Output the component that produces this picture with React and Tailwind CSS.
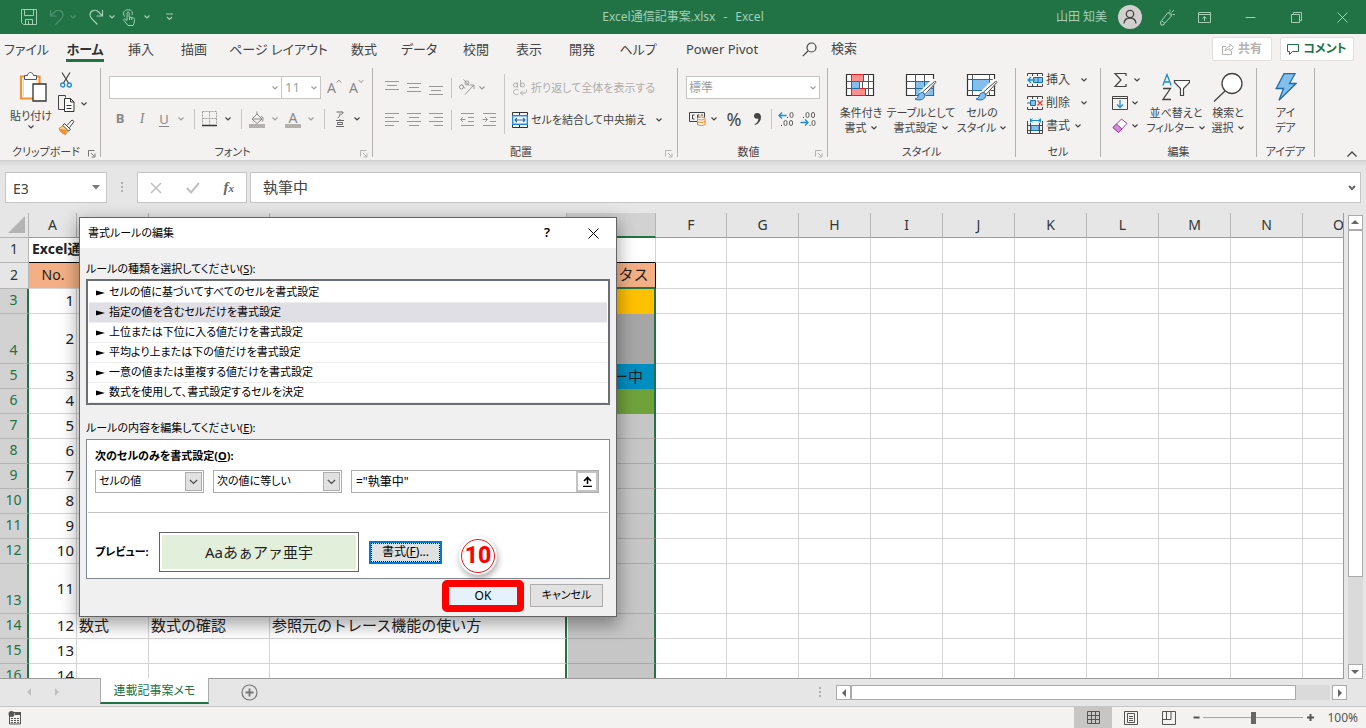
import { useState } from 'react';

const TABS = [
  ['ファイル', 'w-[53px]'],
  ['ホーム', 'w-16'],
  ['挿入', 'w-12'],
  ['描画', 'w-[58px]'],
  ['ページ レイアウト', 'w-[111px]'],
  ['数式', 'w-[60px]'],
  ['データ', 'w-[50px]'],
  ['校閲', 'w-16'],
  ['表示', 'w-[42px]'],
  ['開発', 'w-16'],
  ['ヘルプ', 'w-12'],
  ['Power Pivot', 'w-[120px]'],
];

const RULES = [
  'セルの値に基づいてすべてのセルを書式設定',
  '指定の値を含むセルだけを書式設定',
  '上位または下位に入る値だけを書式設定',
  '平均より上または下の値だけを書式設定',
  '一意の値または重複する値だけを書式設定',
  '数式を使用して、書式設定するセルを決定',
];

const COLUMNS = ['A', 'B', 'C', 'D', 'E', 'F', 'G', 'H', 'I', 'J', 'K', 'L', 'M', 'N', 'O'];
const COVERED = ['B', 'C', 'D', 'E'];
const COL_WIDTH = {
  A: 'w-12',
  C: 'w-[121px]',
  D: 'w-[297px]',
  E: 'w-[89px]',
  F: 'w-[71px]',
};

const ROWS = [
  { n: 1, A: 'Excel通信' },
  { n: 2, A: 'No.', E: 'ステータス' },
  { n: 3, A: '1', fill: 'bg-[#ffc000]' },
  { n: 4, A: '2', tall: true, fill: 'bg-[#a6a6a6]' },
  { n: 5, A: '3', E: 'レビュー中', fill: 'bg-[#008dc0]' },
  { n: 6, A: '4', fill: 'bg-[#70a23c]' },
  { n: 7, A: '5' },
  { n: 8, A: '6' },
  { n: 9, A: '7' },
  { n: 10, A: '8' },
  { n: 11, A: '9' },
  { n: 12, A: '10' },
  { n: 13, A: '11', tall: true },
  { n: 14, A: '12', B: '数式', C: '数式の確認', D: '参照元のトレース機能の使い方' },
  { n: 15, A: '13' },
  { n: 16, A: '14' },
];

function Svg({ w = 16, h = 16, className = '', children }) {
  return (
    <svg
      width={w}
      height={h}
      viewBox={`0 0 ${w} ${h}`}
      fill="none"
      stroke="currentColor"
      className={`shrink-0 ${className}`}
      aria-hidden="true"
    >
      {children}
    </svg>
  );
}

function Chevron({ className = '' }) {
  return (
    <Svg w={8} h={6} className={className}>
      <path d="M1.500 1.500 4 4l2.500-2.500" strokeWidth="1.200" />
    </Svg>
  );
}

function IconButton({ label, className = 'w-[22px]', children }) {
  return (
    <button type="button" aria-label={label} className={`flex h-6 shrink-0 items-center justify-center ${className}`}>
      {children}
    </button>
  );
}

function Sep({ className = 'mx-[6px]' }) {
  return <span className={`h-5 w-px shrink-0 bg-[#c8c6c4] ${className}`} />;
}

function Launcher({ className = 'text-[#777]' }) {
  return (
    <Svg w={8} h={8} className={className}>
      <path d="M.5 6.500V.5h6M3 3l3 3M7 3.500V7H3.500" />
    </Svg>
  );
}

function Group({ title, width, launcher, children }) {
  return (
    <section className={`flex h-[89px] shrink-0 flex-col border-r border-[#b3b0ad] ${width}`}>
      <div className="flex h-[78px] w-full shrink-0">{children}</div>
      <div className="flex h-[11px] items-center leading-[11px]">
        <span className={launcher ? 'w-1' : 'w-3'} />
        <span className="flex-1 whitespace-nowrap text-center">{title}</span>
        <span className="flex w-3 pt-1">{launcher && <Launcher className={launcher} />}</span>
      </div>
    </section>
  );
}

function BigButton({ icon, lines, chevron = true, className }) {
  return (
    <button type="button" className={`flex shrink-0 flex-col items-center leading-[15px] ${className}`}>
      <span className="flex h-[37px] items-center justify-center">{icon}</span>
      <span className="whitespace-nowrap">{lines[0]}</span>
      <span className="flex items-center gap-[3px] whitespace-nowrap">
        {lines[1]}
        {chevron && <Chevron />}
      </span>
    </button>
  );
}

function TitleBar() {
  return (
    <header className="flex h-[34px] shrink-0 items-center bg-[#217346] text-xs text-[#a3d0b5]">
      <div className="flex flex-1 items-center">
        <IconButton label="上書き保存" className="ml-[17px] w-6">
          <Svg>
            <path d="M.5.5h15v15h-13l-2-2zM3.500.5v6h9v-6M4.500 15.500v-5h7v5M7.500 12v3" />
          </Svg>
        </IconButton>
        <IconButton label="元に戻す" className="ml-1 w-6 text-[#4f9270]">
          <Svg>
            <path d="M1.500 1v6h6M1.500 7 6 2.500C9 0 14 1.500 14 6c0 2-1 3-2.500 4.500L6.500 15.500" strokeWidth="1.200" />
          </Svg>
        </IconButton>
        <Chevron className="text-[#4f9270]" />
        <IconButton label="やり直し" className="ml-[7px] w-6">
          <Svg>
            <path d="M14.500 1v6h-6M14.500 7 10 2.500C7 0 2 1.500 2 6c0 2 1 3 2.500 4.500l5 5" strokeWidth="1.200" />
          </Svg>
        </IconButton>
        <Chevron />
        <IconButton label="タッチ/マウス モードの切り替え" className="ml-px w-6">
          <Svg w={14} h={17}>
            <path d="M5 11.500V4.200c0-1.600 2.200-1.600 2.200 0V8l4 .8c1 .2 1.400.8 1.300 1.700l-.5 4-1 2H6l-4-5c-.8-1.200.4-2 1.400-1.300z" />
            <path d="M2.500 7.500C.3 4 2 .8 6 .8s5 2.700 4 5.200M7.500 8v3M9.700 8.500V11" />
          </Svg>
        </IconButton>
        <Chevron className="ml-[2px]" />
        <IconButton label="クイック アクセス ツール バーのユーザー設定" className="ml-[6px] w-6">
          <Svg w={9} h={8}>
            <path d="M1 1h7M2 4l2.500 2.500L7 4" strokeWidth="1.200" />
          </Svg>
        </IconButton>
      </div>
      <h1 className="flex gap-2 whitespace-nowrap">
        <span>Excel通信記事案.xlsx</span>
        <span>-</span>
        <span>Excel</span>
      </h1>
      <div className="flex flex-1 items-center justify-end">
        <span className="whitespace-nowrap">山田 知美</span>
        <span className="ml-[11px] flex size-6 items-center justify-center rounded-full bg-[#d2d0ce] text-[#444]">
          <Svg w={14} h={16}>
            <circle cx="7" cy="5" r="3.700" strokeWidth="1.300" />
            <path d="M1 14.500c.3-3.500 2.500-5.500 6-5.500s5.700 2 6 5.500" strokeWidth="1.300" />
          </Svg>
        </span>
        <IconButton label="近日公開の機能" className="ml-3 w-[26px]">
          <Svg w={17} h={17}>
            <path d="M9 3.500 1.500 13l.5 3h2l8.500-9zM3 12l3 2.500-2 1.500M9.500 3.500c1-.5 3.500 1.500 3 3M11 2.500V.5M12.500 3.500 15 1M13.500 5.500h2.500" />
          </Svg>
        </IconButton>
        <IconButton label="リボンの表示オプション" className="ml-[11px] w-[26px]">
          <Svg w={13} h={11}>
            <path d="M.5.5h12v10H.5zM.5 2.500h12M6.500 9V4.500M4.500 6.500l2-2 2 2" />
          </Svg>
        </IconButton>
        <IconButton label="最小化" className="w-[46px] pl-5">
          <Svg w={11} h={11}>
            <path d="M.5 5.500h10" />
          </Svg>
        </IconButton>
        <IconButton label="元に戻す (縮小)" className="w-[46px] pl-5">
          <Svg w={11} h={11}>
            <path d="M.5 2.500h8v8h-8zM2.500 2.500v-2h8v8h-2" />
          </Svg>
        </IconButton>
        <IconButton label="閉じる" className="mr-[11px] w-[46px] pl-5">
          <Svg w={11} h={11}>
            <path d="m.5.5 10 10m0-10-10 10" />
          </Svg>
        </IconButton>
      </div>
    </header>
  );
}

function TabBar() {
  return (
    <nav className="flex h-[34px] shrink-0 items-center text-[13px]">
      {TABS.map(([name, width]) => (
        <button key={name} type="button" className={`flex h-[30px] shrink-0 justify-center self-start whitespace-nowrap ${width}`}>
          <span
            className={`h-7 pt-1 leading-[22px] ${name === 'ホーム' ? 'border-b-[3px] border-[#217346] font-bold text-[#333]' : ''}`}
          >
            {name}
          </span>
        </button>
      ))}
      <button type="button" className="ml-5 flex h-[30px] items-center gap-[14px] self-start whitespace-nowrap">
        <Svg w={15} h={15}>
          <circle cx="9.500" cy="5.500" r="4.500" strokeWidth="1.200" />
          <path d="M6 9 .8 14.200" strokeWidth="1.200" />
        </Svg>
        検索
      </button>
      <div className="ml-auto mr-3 flex gap-2 self-start pt-[3px]">
        <button
          type="button"
          className="flex h-6 w-[60px] items-center justify-center gap-1 whitespace-nowrap rounded-xs border border-[#e1dfdd] bg-white text-xs font-bold text-[#b5b3b1]"
        >
          <Svg w={12} h={12}>
            <path d="M4 3.500H.5v8h9V8M3 8c.5-3 2.500-4.500 5-4.500V1l3.500 3.500L8 8V6C6 6 4.500 6.500 3 8z" />
          </Svg>
          共有
        </button>
        <button
          type="button"
          className="flex h-6 w-[74px] items-center justify-center gap-1 whitespace-nowrap rounded-xs border border-[#e1dfdd] bg-white text-xs font-bold text-[#217346]"
        >
          <Svg w={12} h={11}>
            <path d="M.5.5h11v7h-6l-3 3v-3h-2z" />
          </Svg>
          コメント
        </button>
      </div>
    </nav>
  );
}

function HLines({ rows }) {
  return (
    <Svg w={14} h={16} className="text-[#9a9896]">
      {rows.map(([x, y, w]) => (
        <path key={y} d={`M${x} ${y}.5h${w}`} />
      ))}
    </Svg>
  );
}

function TableIcon({ children }) {
  return (
    <Svg w={32} h={28}>
      <path d="M1.500 1.500h27v21h-27z" fill="#fff" stroke="#333" strokeWidth="1.200" />
      {children}
    </Svg>
  );
}

function Brush() {
  return (
    <>
      <path d="M30 8 19 22l-3-2.500L28 7.500z" stroke="#fff" strokeWidth="3" fill="#fff" />
      <path d="M29.500 8.500c.7-.8 1.800.2 1.200 1L20 21.500 17.500 19z" fill="#fff" stroke="#444" />
      <path d="M17.500 19.500c-3 0-4 2-4.500 4-.4 1.500-2 2.300-3 2.500 4 2 9.500 1 10-4z" fill="#83beec" stroke="#1e6dab" />
    </>
  );
}

function CellIcon({ kind }) {
  return (
    <Svg w={16} h={16}>
      {kind === 'format' ? (
        <>
          <path d="M3.500 2.500h10M3.500.5v4M13.500.5v4M5.500.8 3.700 2.500l1.800 1.700M11.500.8l1.800 1.700-1.800 1.700" stroke="#1e8bd2" />
          <path d="M.5 3v12.500h15V3M.5 7.500h15M.5 12.500h15M3.500 5v10M12.500 5v10" stroke="#444" />
          <path d="M4 7.500h8v5H4z" fill="#83beec" stroke="#1e6dab" />
        </>
      ) : (
        <>
          <path d="M.5 4V1.500h15V4M5.500 1.500V4M10.500 1.500V4M.5 12v2.500h15V12M5.500 12v2.500M10.500 12v2.500" stroke="#444" />
          {kind === 'insert' ? (
            <>
              <path d="M6.500 5.500h9v5h-9zM11 5.500v5" fill="#83beec" stroke="#1e6dab" />
              <path d="M8 8H1M4 5 1 8l3 3" stroke="#1e8bd2" strokeWidth="1.300" />
            </>
          ) : (
            <>
              <path d="M3.500 5.500h5v5h-5zM0 8h3" fill="#83beec" stroke="#1e6dab" />
              <path d="m10.500 5.500 5 5m0-5-5 5" stroke="#e8413c" strokeWidth="1.500" />
            </>
          )}
        </>
      )}
    </Svg>
  );
}

function Ribbon() {
  return (
    <div className="flex h-[93px] shrink-0 border-b border-[#d2d0ce] text-[11px]">
      <Group title="クリップボード" width="w-[101px]" launcher="text-[#777]">
        <button type="button" className="ml-1 flex w-[54px] flex-col items-center leading-[15px]">
          <Svg w={28} h={31} className="mb-[6px] ml-1 mt-[3px]">
            <path d="M2 5.500h18.500v22H2z" fill="#fff" stroke="#f29130" strokeWidth="2.200" />
            <path d="M4.500 7.500v18M18 8v4" stroke="#fbd48a" />
            <path d="M5.500 8.500v-4h3c.5-4 5.500-4 6 0h3v4z" fill="#fff" stroke="#555" />
            <path d="M14 13h13v17H14z" fill="#fff" stroke="#333" strokeWidth="1.300" />
          </Svg>
          <span className="whitespace-nowrap">貼り付け</span>
          <Chevron className="mt-px" />
        </button>
        <div className="flex flex-col">
          <IconButton label="切り取り" className="w-4">
            <Svg w={12} h={16}>
              <path d="M2 .5 8.500 11M10 .5 3.500 11" stroke="#444" strokeWidth="1.200" />
              <circle cx="2.700" cy="13" r="2" stroke="#1e8bd2" strokeWidth="1.300" />
              <circle cx="9.300" cy="13" r="2" stroke="#1e8bd2" strokeWidth="1.300" />
            </Svg>
          </IconButton>
          <button type="button" aria-label="コピー" className="flex h-[23px] items-center gap-[5px]">
            <Svg w={17} h={17}>
              <path d="M6.500 14.500h-6v-14h7v2" stroke="#444" />
              <path d="M6.500 3.500h6l3.500 3.500v9.500H6.500zM12.500 3.500V7H16M8.500 10.500h5M8.500 13.500h5" stroke="#333" fill="#fff" />
            </Svg>
            <Chevron />
          </button>
          <IconButton label="書式のコピー/貼り付け" className="w-4">
            <Svg w={17} h={16}>
              <path d="M1 9.500 6 6l5 5-3.500 4.500C4 14.500 2 12.500 1 9.500z" fill="#fbd48a" stroke="#f08020" />
              <path d="M1 9.500l8 1.500-1.500 4.500C4 14.500 2 12.500 1 9.500z" fill="#f29130" stroke="none" />
              <path d="m6.500 4.500 6 6M9 6.500 14 1l2 1.500-4.500 6M6.500 4.500l-1.500 2 5.500 5.500 2-1.500" stroke="#444" fill="#fff" />
            </Svg>
          </IconButton>
        </div>
      </Group>

      <Group title="フォント" width="w-[272px]" launcher="text-[#b5b3b1]">
        <div className="flex flex-col pl-2 pt-2">
          <div className="flex items-center">
            <button type="button" aria-label="フォント名" className="flex h-[23px] w-[173px] items-center justify-end border border-[#c8c6c4] bg-white pr-[2px] text-[#a19f9d]">
              <Chevron />
            </button>
            <button type="button" aria-label="フォント サイズ" className="-ml-px flex h-[23px] w-10 items-center justify-between border border-[#c8c6c4] bg-white pl-[3px] pr-[2px] text-[13px] text-[#a19f9d]">
              11
              <Chevron />
            </button>
            <button type="button" aria-label="フォント サイズの拡大" className="ml-[6px] flex w-[22px] text-sm text-[#8a8886]">
              A<Svg w={6} h={5} className="mt-px"><path d="M.8 3.500 3 1.200l2.200 2.300" /></Svg>
            </button>
            <button type="button" aria-label="フォント サイズの縮小" className="flex w-[22px] text-sm text-[#8a8886]">
              A<Svg w={6} h={5} className="mt-px"><path d="M.8 1.200 3 3.500l2.200-2.300" /></Svg>
            </button>
          </div>
          <div className="mt-2 flex items-center text-[13px] text-[#8a8886]">
            <IconButton label="太字"><b>B</b></IconButton>
            <IconButton label="斜体"><i className="font-['Liberation_Serif'] text-sm">I</i></IconButton>
            <IconButton label="下線"><span className="border-b border-[#8a8886] leading-[14px]">U</span></IconButton>
            <IconButton label="下線の種類" className="w-3 text-[#a19f9d]"><Chevron /></IconButton>
            <Sep className="ml-[7px] mr-1" />
            <IconButton label="罫線">
              <Svg>
                <path d="M.5.500h14v13M.5.5v13M7.500.5v13M.5 7.500h14" stroke="#a19f9d" strokeDasharray="2 1" />
                <path d="M0 14.500h15" stroke="#333" strokeWidth="1.500" />
              </Svg>
            </IconButton>
            <IconButton label="罫線の種類" className="w-[14px] text-[#444]"><Chevron /></IconButton>
            <Sep className="ml-[6px] mr-1" />
            <IconButton label="塗りつぶしの色">
              <Svg w={16} h={17}>
                <path d="M3 8 8 3l5 5-5 4.500zM8 3V.5M12 5.500c2 0 2.800 2.500 1.500 5M4 8h8" />
                <path d="M0 15h16" stroke="#b3b0ad" strokeWidth="4" />
              </Svg>
            </IconButton>
            <IconButton label="塗りつぶしの色の一覧" className="w-[14px] text-[#a19f9d]"><Chevron /></IconButton>
            <IconButton label="フォントの色">
              <span className="w-4 border-b-4 border-[#b3b0ad] text-center text-sm leading-[13px]">A</span>
            </IconButton>
            <IconButton label="フォントの色の一覧" className="w-[14px] text-[#a19f9d]"><Chevron /></IconButton>
            <Sep className="ml-[6px] mr-1" />
            <IconButton label="ふりがなの表示/非表示" className="w-[22px] text-[#666]">
              <Svg w={10} h={17}>
                <path d="M1.500 1h6.500c0 1.500-.8 2-2 2.500M5 2.500C5 5 4.500 6 2.500 7M1 9.500h8M2.500 11.500h5v2h-5zM1 15.500h8M5 8v1.500" />
              </Svg>
            </IconButton>
            <IconButton label="ふりがなの設定" className="w-3 text-[#444]"><Chevron /></IconButton>
          </div>
        </div>
      </Group>

      <Group title="配置" width="w-[305px]" launcher="text-[#b5b3b1]">
        <div className="flex flex-col gap-2 pl-2 pt-2">
          <div className="flex items-center text-[#9a9896]">
            <IconButton label="上揃え"><HLines rows={[[0, 1, 14], [2, 5, 10], [0, 9, 14]]} /></IconButton>
            <IconButton label="上下中央揃え"><HLines rows={[[0, 3, 14], [2, 7, 10], [0, 11, 14]]} /></IconButton>
            <IconButton label="下揃え"><HLines rows={[[0, 6, 14], [2, 10, 10], [0, 14, 14]]} /></IconButton>
            <Sep className="ml-1 mr-1" />
            <IconButton label="方向">
              <Svg w={18} h={18}>
                <path d="M7 15.500 16 6M16 10V6h-4" />
                <circle cx="3.500" cy="8" r="2" />
                <path d="M4 5.500 7 9.500M5.500.5 11 6.500" />
                <circle cx="9" cy="4" r="2" />
              </Svg>
            </IconButton>
            <Chevron />
          </div>
          <div className="flex items-center text-[#9a9896]">
            <IconButton label="左揃え"><HLines rows={[[0, 1, 14], [0, 5, 9], [0, 9, 14], [0, 13, 9]]} /></IconButton>
            <IconButton label="中央揃え"><HLines rows={[[0, 1, 14], [2, 5, 10], [0, 9, 14], [2, 13, 10]]} /></IconButton>
            <IconButton label="右揃え"><HLines rows={[[0, 1, 14], [5, 5, 9], [0, 9, 14], [5, 13, 9]]} /></IconButton>
            <Sep className="ml-1 mr-1" />
            <IconButton label="インデントを減らす">
              <Svg w={15} h={14}>
                <path d="M1 .5h13M8 4.500h6M8 8.500h6M1 12.500h13M5.500 6.500H.5M2.800 4.200.5 6.500l2.300 2.300" />
              </Svg>
            </IconButton>
            <IconButton label="インデントを増やす">
              <Svg w={15} h={14}>
                <path d="M1 .5h13M8 4.500h6M8 8.500h6M1 12.500h13M.5 6.500h5M3.200 4.200 5.500 6.500 3.200 8.800" />
              </Svg>
            </IconButton>
          </div>
        </div>
        <Sep className="ml-1 mt-[6px] h-[60px]" />
        <div className="flex flex-col gap-2 pl-[7px] pt-2">
          <button type="button" className="flex h-6 items-center gap-[3px] whitespace-nowrap text-[#b0aeac]">
            <Svg w={16} h={16}>
              <circle cx="3.500" cy="5" r="2" />
              <path d="M5.500 2.500V7.500M8.500 0v7M6.500 10C4 8.500 1.500 10 1.500 12s2.500 3.500 5 2M14.500 9.500v2c0 1-.5 1.500-1.500 1.500H8.500M11 10.500 8.500 13l2.500 2.500" />
              <circle cx="10.500" cy="5" r="2" />
            </Svg>
            折り返して全体を表示する
          </button>
          <button type="button" className="flex h-6 items-center gap-[3px] whitespace-nowrap">
            <Svg w={16} h={16}>
              <path d="M.5 3.500v-3h15v3M7.500.5v3M.5 12.500v3h15v-3M7.500 12.500v3" stroke="#333" />
              <path d="M.7 3.700h14.600v8.600H.7z" fill="#fff" stroke="#1e8bd2" strokeWidth="1.400" />
              <path d="M3 8h10M5 6 3 8l2 2M11 6l2 2-2 2" stroke="#1e6dab" strokeWidth="1.200" />
            </Svg>
            セルを結合して中央揃え
            <Chevron className="ml-[6px]" />
          </button>
        </div>
      </Group>

      <Group title="数値" width="w-[150px]" launcher="text-[#b5b3b1]">
        <div className="flex flex-col pl-2 pt-2">
          <button type="button" className="flex h-[23px] w-[134px] items-center justify-between border border-[#c8c6c4] bg-white pl-[2px] pr-[2px] text-xs text-[#a19f9d]">
            標準
            <Chevron />
          </button>
          <div className="mt-2 flex items-center">
            <IconButton label="通貨表示形式">
              <Svg w={17} h={14}>
                <path d="M.5.5h15v9H.5z" stroke="#444" />
                <path d="M5.500 3H3.500v4h2M8.500 7V3h2M8.500 5h2M12 3h2" stroke="#444" />
                <path d="M8.500 6.500v6c1 1.300 6.500 1.300 7.500 0v-6z" fill="#fff" stroke="#f08020" />
                <ellipse cx="12.200" cy="6.500" rx="3.800" ry="1.500" fill="#fff" stroke="#f08020" />
                <path d="M8.500 9.500c1 1.300 6.500 1.300 7.500 0" stroke="#f08020" />
              </Svg>
            </IconButton>
            <IconButton label="通貨の一覧" className="w-3"><Chevron /></IconButton>
            <IconButton label="パーセント スタイル" className="ml-[2px] w-6 text-[18px]">%</IconButton>
            <IconButton label="桁区切りスタイル">
              <Svg w={9} h={14}>
                <path d="M4.300 1C2.300 1 1 2.300 1 4s1.300 2.800 3 2.800c.6 0 1-.1 1.400-.4C5.300 9 4 11 1.500 12.200l.6.900C6 11.500 8 8.500 8 5.200 8 2.600 6.500 1 4.300 1z" fill="#444" stroke="none" />
              </Svg>
            </IconButton>
            <Sep className="mx-[3px]" />
            <IconButton label="小数点以下の表示桁数を増やす">
              <Svg w={16} h={16}>
                <path d="M8.500 4.500H1M4 1.500l-3 3 3 3" stroke="#1e8bd2" strokeWidth="1.300" />
                <path d="M9 6.500h1M3 14.500h1" stroke="#444" />
                <rect x="12" y="1.500" width="3" height="5" rx="1.500" stroke="#666" />
                <rect x="6" y="9.500" width="3" height="5" rx="1.500" stroke="#666" />
                <rect x="11.500" y="9.500" width="3" height="5" rx="1.500" stroke="#666" />
              </Svg>
            </IconButton>
            <IconButton label="小数点以下の表示桁数を減らす">
              <Svg w={16} h={16}>
                <path d="M.5 11.500H8M5 8.500l3 3-3 3" stroke="#1e8bd2" strokeWidth="1.300" />
                <path d="M3 6.500h1M9.500 14.500h1" stroke="#444" />
                <rect x="6" y="1.500" width="3" height="5" rx="1.500" stroke="#666" />
                <rect x="11.500" y="1.500" width="3" height="5" rx="1.500" stroke="#666" />
                <rect x="12" y="9.500" width="3" height="5" rx="1.500" stroke="#666" />
              </Svg>
            </IconButton>
          </div>
        </div>
      </Group>

      <Group title="スタイル" width="w-[188px]">
        <BigButton
          className="w-[62px] pl-1"
          lines={['条件付き', '書式']}
          icon={
            <TableIcon>
              <path d="M1.500 8.500h27M1.500 15.500h27M6.500 1.500v21M17.500 1.500v21M23.500 1.500v21" stroke="#555" />
              <path d="M6.500 1.500h12v7h-12zM6.500 15.500h14v7h-14z" fill="#ff8e8e" stroke="#e02020" />
              <path d="M6.500 8.500h8v7h-8z" fill="#83beec" stroke="#1e6dab" />
            </TableIcon>
          }
        />
        <BigButton
          className="w-[62px]"
          lines={['テーブルとして', '書式設定']}
          icon={
            <TableIcon>
              <path d="M10.500 8.500h18v14h-18z" fill="#83beec" stroke="none" />
              <path d="M1.500 8.500h27M1.500 15.500h27M10.500 1.500v21M19.500 1.500v21" stroke="#555" />
              <path d="M10.500 8.500h18v14h-18zM10.500 15.500h18M19.500 8.500v14" stroke="#1e6dab" />
              <Brush />
            </TableIcon>
          }
        />
        <BigButton
          className="w-[60px]"
          lines={['セルの', 'スタイル']}
          icon={
            <TableIcon>
              <path d="M1.500 6.500h27M1.500 17.500h27M6.500 1.500v21M23.500 1.500v21" stroke="#555" />
              <path d="M6.500 6.500h17v11h-17z" fill="#83beec" stroke="#1e6dab" />
              <Brush />
            </TableIcon>
          }
        />
      </Group>

      <Group title="セル" width="w-[85px]">
        <div className="flex w-full flex-col pl-[11px] text-xs">
          {[['挿入', 'insert'], ['削除', 'delete'], ['書式', 'format']].map(([label, kind]) => (
            <button key={kind} type="button" className="flex h-[23px] items-center gap-[3px] whitespace-nowrap">
              <CellIcon kind={kind} />
              {label}
              <Chevron className={kind === 'format' ? 'ml-px' : 'ml-[7px]'} />
            </button>
          ))}
        </div>
      </Group>

      <Group title="編集" width="w-[156px]">
        <div className="flex flex-col pl-[11px]">
          <button type="button" aria-label="合計" className="flex h-[23px] items-center gap-[5px]">
            <Svg w={16} h={16}>
              <path d="M14 4V1.500H3L9 8l-6 6.500h11V12" stroke="#444" strokeWidth="1.200" />
            </Svg>
            <Chevron />
          </button>
          <button type="button" aria-label="フィル" className="flex h-[23px] items-center gap-[3px]">
            <Svg w={16} h={16}>
              <path d="M.5 1.500h15v13H.5zM.5 3.500h15" stroke="#444" />
              <path d="M8 5v7M5 9.500l3 3 3-3" stroke="#1e8bd2" strokeWidth="1.300" />
            </Svg>
            <Chevron />
          </button>
          <button type="button" aria-label="クリア" className="flex h-[23px] items-center gap-[3px]">
            <Svg w={16} h={16}>
              <path d="m1 9.500 8.500-8.500 5.500 4.500-8.500 9z" fill="#fff" stroke="#a33ea8" />
              <path d="m1 9.500 3.500-3.500 5.500 5-3.500 3.500z" fill="#d48ad8" stroke="#a33ea8" />
            </Svg>
            <Chevron />
          </button>
        </div>
        <BigButton
          className="ml-[6px] w-[58px]"
          lines={['並べ替えと', 'フィルター']}
          icon={
            <Svg w={28} h={28}>
              <path d="m.8 12.500 4.200-11 4.200 11M2.300 9h5.400" stroke="#1e8bd2" strokeWidth="1.300" />
              <path d="M1 15.500h7.500L1 26.500h8" stroke="#444" strokeWidth="1.300" />
              <path d="M12.500 7.500h15v2l-6 6v7h-3v-7l-6-6z" fill="#fff" stroke="#444" strokeWidth="1.200" />
            </Svg>
          }
        />
        <BigButton
          className="w-[46px]"
          lines={['検索と', '選択']}
          icon={
            <Svg w={30} h={30}>
              <circle cx="19" cy="11.500" r="10" fill="#fff" stroke="#444" strokeWidth="1.300" />
              <path d="M12 19 1 29.500" stroke="#444" strokeWidth="1.300" />
            </Svg>
          }
        />
      </Group>

      <Group title="アイデア" width="w-[58px]">
        <BigButton
          className="w-[57px]"
          chevron={false}
          lines={['アイ', 'デア']}
          icon={
            <Svg w={22} h={28}>
              <path d="M9 .700h11L14.500 10.500H21L4 27.300l4.500-11.800H1.200z" fill="#83beec" stroke="#1e6dab" strokeWidth="1.300" />
            </Svg>
          }
        />
      </Group>
      <button type="button" aria-label="リボンを折りたたむ" className="ml-auto mr-2 self-end pb-[2px]">
        <Svg w={12} h={8}>
          <path d="M1.500 6.500 6 2l4.500 4.500" strokeWidth="1.300" />
        </Svg>
      </button>
    </div>
  );
}

function FormulaBar() {
  return (
    <div className="flex h-[52px] shrink-0 items-start bg-linear-to-b from-[#d6d6d6] to-[#e6e6e6] to-10% pl-[5px] pr-[5px] pt-[11px] text-[#444]">
      <div className="flex h-[31px] w-[102px] shrink-0 items-center border border-[#c6c6c6] bg-white">
        <input aria-label="名前ボックス" defaultValue="E3" className="w-[86px] pl-[7px] pt-[2px] text-sm outline-none" />
        <Svg w={8} h={5}>
          <path d="M0 0h8L4 4.500z" fill="#777" stroke="none" />
        </Svg>
      </div>
      <Svg w={30} h={31} className="text-[#b0b0b0]">
        <path d="M15 10v2M15 14v2M15 18v2" strokeWidth="2" />
      </Svg>
      <div className="flex h-[31px] w-[110px] shrink-0 items-center justify-between border border-[#c6c6c6] bg-white px-3">
        <button type="button" aria-label="キャンセル">
          <Svg w={12} h={12} className="text-[#c0c0c0]"><path d="m1 1 10 10m0-10L1 11" strokeWidth="1.600" /></Svg>
        </button>
        <button type="button" aria-label="入力">
          <Svg w={14} h={12} className="text-[#c0c0c0]"><path d="m1 6 4 4.500 8-9.500" strokeWidth="2" /></Svg>
        </button>
        <button type="button" aria-label="関数の挿入" className="font-['Liberation_Serif'] text-[15px] font-bold italic text-[#666]">
          f<span className="text-[11px]">x</span>
        </button>
      </div>
      <div className="ml-[3px] flex h-[31px] flex-1 items-center border border-[#c6c6c6] bg-white pr-1">
        <input aria-label="数式バー" defaultValue="執筆中" className="min-w-0 flex-1 pl-3 text-[15px] outline-none" />
        <Svg w={8} h={6} className="text-[#666]"><path d="m1 1 3 3 3-3" strokeWidth="2" /></Svg>
      </div>
    </div>
  );
}

function cellClass(row, col) {
  const base = 'overflow-visible whitespace-nowrap p-0 pb-[2px] align-middle';
  if (col > 'E') return `${base} border-b border-r border-[#d4d4d4]`;
  if (row.n === 1) {
    return `${base} border-b border-b-black pl-[3px] text-sm font-bold ${col === 'E' ? 'border-r border-r-[#d4d4d4]' : ''}`;
  }
  if (row.n === 2) {
    return col === 'E'
      ? `${base} border-b-2 border-r border-b-[#217346] border-r-black bg-[#f4b084] text-center text-[15px]`
      : `${base} border-b border-b-[#d4d4d4] bg-[#f4b084] text-center text-sm`;
  }
  if (col === 'E') {
    return `${base} border-l border-r-2 border-l-white border-r-[#217346] text-[15px] ${
      row.fill || 'border-b border-b-[#a9a9a9] bg-[#c6c6c6]'
    }`;
  }
  if (col === 'D') return `${base} border-b border-r-2 border-b-[#d4d4d4] border-r-[#217346] pl-[2px] text-[15px]`;
  if (col === 'A') return `${base} border-b border-r border-[#d4d4d4] pr-[2px] text-right text-[15px]`;
  return `${base} border-b border-r border-[#d4d4d4] pl-[2px] text-[15px]`;
}

function Sheet() {
  return (
    <div className="min-w-0 flex-1 overflow-hidden border-b border-r border-[#9b9b9b] bg-white">
      <table className="w-px table-fixed border-separate border-spacing-0 leading-[22px] text-[#222]">
        <thead>
          <tr className="h-[25px] bg-[#e6e6e6] text-[#333]">
            <th className="w-[29px] border-b border-r border-[#b5b5b5] p-0">
              <Svg w={26} h={20}>
                <path d="M25 1v17H8z" fill="#b4b4b4" stroke="none" />
              </Svg>
            </th>
            {COLUMNS.map((col) => (
              <th
                key={col}
                scope="col"
                className={`border-r border-r-[#b5b5b5] p-0 text-sm font-normal ${COL_WIDTH[col] || 'w-[72px]'} ${
                  col === 'E' ? 'border-b-2 border-b-[#217346] bg-[#d2d2d2]' : 'border-b border-b-[#9b9b9b]'
                }`}
              >
                {!COVERED.includes(col) && col}
              </th>
            ))}
          </tr>
        </thead>
        <tbody>
          {ROWS.map((row) => (
            <tr key={row.n} className={row.tall ? 'h-[50px]' : 'h-[25px]'}>
              <th
                scope="row"
                className={`border-b p-0 pb-[2px] text-center align-bottom text-sm font-normal leading-[22px] ${
                  row.n >= 3
                    ? 'border-r-2 border-b-[#b5b5b5] border-r-[#217346] bg-[#d2d2d2] text-[#217346]'
                    : 'border-r border-[#b5b5b5] bg-[#e6e6e6] text-[#333]'
                }`}
              >
                {row.n}
              </th>
              {COLUMNS.map((col) => (
                <td key={col} className={cellClass(row, col)}>
                  {row[col]}
                </td>
              ))}
            </tr>
          ))}
        </tbody>
      </table>
    </div>
  );
}

function Arrow({ dir, className = 'text-[#666]' }) {
  const d = { up: 'M0 5h8L4 1z', down: 'M0 2h8L4 6z', left: 'M6 0v8L2 4z', right: 'M2 0v8l4-4z' }[dir];
  return (
    <Svg w={8} h={8} className={className}>
      <path d={d} fill="currentColor" stroke="none" />
    </Svg>
  );
}

function VerticalScroll() {
  return (
    <div className="flex w-[22px] shrink-0 flex-col items-center px-1 pt-[2px]">
      <button type="button" aria-label="上へスクロール" className="flex h-[15px] w-[15px] items-center justify-center border border-[#ababab] bg-white">
        <Arrow dir="up" />
      </button>
      <div className="flex w-[15px] flex-1 flex-col bg-[#dadada]">
        <div className="h-4/5 border border-[#ababab] bg-white" />
      </div>
      <button type="button" aria-label="下へスクロール" className="flex h-[15px] w-[15px] items-center justify-center border border-[#ababab] bg-white">
        <Arrow dir="down" />
      </button>
    </div>
  );
}

function SheetTabs() {
  return (
    <div className="flex h-7 shrink-0 items-start border-b border-[#c6c6c6] pr-[19px]">
      <div className="flex h-[26px] w-[100px] items-center gap-5 pl-[25px]">
        <Arrow dir="left" className="text-[#c0c0c0]" />
        <Arrow dir="right" className="text-[#c0c0c0]" />
      </div>
      <button type="button" className="-mt-px h-[26px] w-[109px] whitespace-nowrap border-x border-b-2 border-x-[#ababab] border-b-[#217346] bg-white pt-[2px] text-xs text-[#217346] [font-feature-settings:'palt']">
        連載記事案メモ
      </button>
      <button type="button" aria-label="新しいシート" className="ml-8 mt-[5px]">
        <Svg w={17} h={17} className="text-[#777]">
          <circle cx="8.500" cy="8.500" r="7.500" strokeWidth="1.200" />
          <path d="M8.500 4.500v8M4.500 8.500h8" strokeWidth="1.800" />
        </Svg>
      </button>
      <Svg w={16} h={26} className="ml-auto text-[#b0b0b0]">
        <path d="M8 8v2M8 12v2M8 16v2" strokeWidth="2" />
      </Svg>
      <div className="ml-2 mt-[6px] flex h-[15px] w-[511px] max-w-[40vw]">
        <button type="button" aria-label="左へスクロール" className="flex w-[15px] shrink-0 items-center justify-center border border-[#ababab] bg-white">
          <Arrow dir="left" />
        </button>
        <div className="mr-[2px] flex flex-1 bg-[#dadada]">
          <div className="w-[93%] border border-[#ababab] bg-white" />
        </div>
        <button type="button" aria-label="右へスクロール" className="flex w-[15px] shrink-0 items-center justify-center border border-[#ababab] bg-white">
          <Arrow dir="right" />
        </button>
      </div>
    </div>
  );
}

function StatusBar() {
  const [zoom, setZoom] = useState(50);
  return (
    <footer className="flex h-[21px] shrink-0 items-center bg-[#f3f2f1] pl-2 pr-2 text-xs text-[#555]">
      <button type="button" aria-label="マクロの記録">
        <Svg w={14} h={14}>
          <path d="M1.500 5v8h11V1.500H6" />
          <path d="M7 1h6v3H7z" fill="#555" stroke="none" />
          <circle cx="3.500" cy="3" r="3" fill="#555" stroke="none" />
          <path d="M3 7.500h8M3 9.500h8M3 11.500h8" strokeDasharray="2 1" />
        </Svg>
      </button>
      <div className="ml-auto flex h-full items-center">
        <button type="button" aria-label="標準" className="flex h-full w-[38px] items-center justify-center bg-[#c8c6c4]">
          <Svg w={13} h={13}><path d="M.5.5h12v12H.5zM.5 4.500h12M.5 8.500h12M4.500.5v12M8.500.5v12" /></Svg>
        </button>
        <button type="button" aria-label="ページ レイアウト" className="flex h-full w-[38px] items-center justify-center">
          <Svg w={14} h={14}><path d="M.5.5h13v13H.5zM3.500 2.500h7v9h-7zM5 5.500h4M5 7.500h4M5 9.500h4" /></Svg>
        </button>
        <button type="button" aria-label="改ページ プレビュー" className="flex h-full w-[38px] items-center justify-center">
          <Svg w={14} h={14}><path d="M.5.5h13v13H.5zM4.500.5v8M.5 8.500h8.500v-8" /></Svg>
        </button>
        <button type="button" aria-label="縮小" className="ml-px flex w-[14px] justify-center">
          <Svg w={7} h={7}><path d="M.5 3.500h6" strokeWidth="2" /></Svg>
        </button>
        <input
          type="range"
          aria-label="ズーム"
          value={zoom}
          onChange={(e) => setZoom(Number(e.target.value))}
          className="h-3 w-[100px] appearance-none bg-linear-to-b from-transparent from-45% via-[#a0a0a0] via-45% to-transparent to-55% [&::-webkit-slider-thumb]:h-3 [&::-webkit-slider-thumb]:w-[5px] [&::-webkit-slider-thumb]:appearance-none [&::-webkit-slider-thumb]:bg-[#666]"
        />
        <button type="button" aria-label="拡大" className="flex w-[14px] justify-center">
          <Svg w={7} h={7}><path d="M0 3.500h7M3.500 0v7" strokeWidth="2" /></Svg>
        </button>
        <span className="w-[41px] text-right">100%</span>
      </div>
    </footer>
  );
}

function DialogSelect({ label, value, className }) {
  return (
    <span className={`relative ${className}`}>
      <select aria-label={label} className="h-[23px] w-full appearance-none border border-[#adadad] bg-white pl-[3px] outline-none">
        <option>{value}</option>
      </select>
      <span className="pointer-events-none absolute right-[2px] top-[2px] flex h-[19px] w-[17px] items-center justify-center border border-[#adadad] bg-[#e1e1e1] text-[#444]">
        <Svg w={9} h={6}><path d="M.8.800 4.500 4.500 8.200.8" strokeWidth="1.200" /></Svg>
      </span>
    </span>
  );
}

function RuleDialog() {
  const [rule, setRule] = useState(1);
  return (
    <div
      role="dialog"
      aria-labelledby="dialog-title"
      className="absolute left-[79px] top-[217px] w-[538px] border border-[#646464] bg-[#f0f0f0] pb-1 text-[11px] text-black shadow-[0_6px_16px_2px_rgba(0,0,0,0.35)]"
    >
      <div className="flex h-[30px] items-center bg-white pl-2">
        <h2 id="dialog-title" className="flex-1">書式ルールの編集</h2>
        <button type="button" aria-label="ヘルプ" className="w-[46px] text-[13px] font-semibold">?</button>
        <button type="button" aria-label="閉じる" className="flex w-[46px] justify-center">
          <Svg w={11} h={11}><path d="m.5.5 10 10m0-10-10 10" /></Svg>
        </button>
      </div>
      <div className="px-[6px]">
        <p id="rule-type" className="pt-3 leading-[18px]">ルールの種類を選択してください(<u>S</u>):</p>
        <div role="listbox" aria-labelledby="rule-type" className="mt-px w-[524px] border-2 border-[#6b6e73] bg-white px-px pt-[2px]">
          {RULES.map((text, i) => (
            <button
              key={text}
              type="button"
              role="option"
              aria-selected={rule === i}
              onClick={() => setRule(i)}
              className={`flex h-5 w-full items-center gap-1 whitespace-nowrap border-b border-[#eee] pl-[7px] text-left ${rule === i ? 'bg-[#e0dfe5]' : ''}`}
            >
              <Svg w={9} h={6}><path d="M0 .5 9 3 0 5.500z" fill="#000" stroke="none" /></Svg>
              {text}
            </button>
          ))}
        </div>
        <p className="pt-[14px] leading-[18px]">ルールの内容を編集してください(<u>E</u>):</p>
        <div className="mt-[2px] h-[140px] w-[524px] border border-[#828790] bg-white">
          <p className="pl-2 pt-[7px] font-bold leading-[18px]">次のセルのみを書式設定(<u>O</u>):</p>
          <div className="mt-[5px] flex gap-[9px] pl-2">
            <DialogSelect label="対象" value="セルの値" className="w-[109px]" />
            <DialogSelect label="条件" value="次の値に等しい" className="w-[129px]" />
            <div className="flex h-[23px] w-[248px] border border-[#adadad]">
              <input aria-label="値" defaultValue={'="執筆中"'} className="min-w-0 flex-1 pl-1 text-xs outline-none" />
              <button type="button" aria-label="範囲の選択" className="flex w-[22px] items-center justify-center border-2 border-[#c3c3c3] bg-white">
                <Svg w={9} h={11}>
                  <path d="M4.500 8V2M1 5l3.500-3.500L8 5M0 10.500h9" stroke="#000" strokeWidth="1.600" />
                </Svg>
              </button>
            </div>
          </div>
          <hr className="mx-px mt-[19px] border-[#c3c3c3]" />
          <div className="mt-[19px] flex items-center pl-2">
            <span className="w-[64px] whitespace-nowrap font-bold">プレビュー:</span>
            <div className="h-10 w-[200px] border border-[#646464] p-[2px]">
              <div className="flex h-full items-center justify-center bg-[#e2efda] text-[15px] text-[#222] [font-feature-settings:normal]">
                Aaあぁアァ亜宇
              </div>
            </div>
            <button type="button" className="ml-[10px] h-[23px] w-[73px] border-2 border-[#0078d7] bg-[#e1e1e1] p-0 text-xs">
              <span className="flex h-full items-center justify-center border border-dotted border-black">
                書式(<u>F</u>)...
              </span>
            </button>
          </div>
        </div>
        <div className="flex h-[33px] items-center justify-end gap-[6px] pr-[7px]">
          <button type="button" className="h-8 w-[82px] rounded-[5px] border-[7px] border-[#fe0000] bg-[#e5f1fb] text-xs leading-[18px]">
            OK
          </button>
          <button type="button" className="h-[23px] w-[73px] border border-[#adadad] bg-[#e1e1e1]">キャンセル</button>
        </div>
      </div>
      <span className="absolute left-[381px] top-[321px] flex size-[34px] items-center justify-center rounded-full border border-[#f01818] bg-white font-['Roboto'] text-[23px] font-extrabold text-[#fe0000] shadow-[0_0_1px_2px_rgba(255,255,255,1),1px_3px_6px_2px_rgba(0,0,0,0.35)]">
        10
      </span>
    </div>
  );
}

export default function App() {
  return (
    <div className="relative flex h-screen flex-col overflow-hidden bg-[#e6e6e6] font-['Noto_Sans','Noto_Sans_CJK_JP',sans-serif] text-[#444]">
      <TitleBar />
      <div className="shrink-0 bg-[#f3f2f1] [font-feature-settings:'palt']">
        <TabBar />
        <Ribbon />
      </div>
      <FormulaBar />
      <main className="flex min-h-0 flex-1">
        <Sheet />
        <VerticalScroll />
      </main>
      <SheetTabs />
      <StatusBar />
      <div className="[font-feature-settings:'palt']">
        <RuleDialog />
      </div>
    </div>
  );
}
